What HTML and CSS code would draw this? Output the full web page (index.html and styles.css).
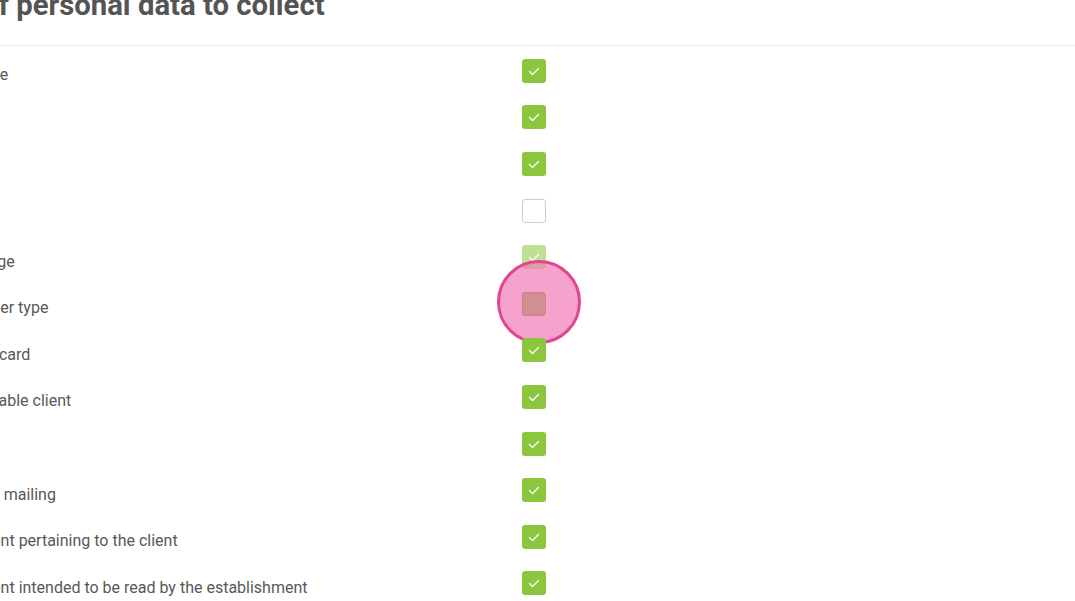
FILE: index.html
```html
<!DOCTYPE html>
<html>
<head>
<meta charset="utf-8">
<link rel="stylesheet" href="styles.css">
</head>
<body>
<div class="page">
  <h1 class="title">List of personal data to collect</h1>
  <div class="divider"></div>
  <div class="table">
    <div class="row"><span class="label">Surname</span><span class="box on"><svg viewBox="0 0 24 24"><polyline points="7.5,12.5 10.5,15.5 16.5,9.5"/></svg></span></div>
    <div class="row"><span class="label">Email</span><span class="box on"><svg viewBox="0 0 24 24"><polyline points="7.5,12.5 10.5,15.5 16.5,9.5"/></svg></span></div>
    <div class="row"><span class="label">Phone</span><span class="box on"><svg viewBox="0 0 24 24"><polyline points="7.5,12.5 10.5,15.5 16.5,9.5"/></svg></span></div>
    <div class="row"><span class="label">Title</span><span class="box off"></span></div>
    <div class="row"><span class="label">Language</span><span class="box on faded"><svg viewBox="0 0 24 24"><polyline points="7.5,12.5 10.5,15.5 16.5,9.5"/></svg></span></div>
    <div class="row"><span class="label">Customer type</span><span class="box pressed"></span><span class="tap"></span></div>
    <div class="row"><span class="label">Loyalty card</span><span class="box on"><svg viewBox="0 0 24 24"><polyline points="7.5,12.5 10.5,15.5 16.5,9.5"/></svg></span></div>
    <div class="row"><span class="label">Undesirable client</span><span class="box on"><svg viewBox="0 0 24 24"><polyline points="7.5,12.5 10.5,15.5 16.5,9.5"/></svg></span></div>
    <div class="row"><span class="label">Gender</span><span class="box on"><svg viewBox="0 0 24 24"><polyline points="7.5,12.5 10.5,15.5 16.5,9.5"/></svg></span></div>
    <div class="row"><span class="label">Receive mailing</span><span class="box on"><svg viewBox="0 0 24 24"><polyline points="7.5,12.5 10.5,15.5 16.5,9.5"/></svg></span></div>
    <div class="row"><span class="label">Comment pertaining to the client</span><span class="box on"><svg viewBox="0 0 24 24"><polyline points="7.5,12.5 10.5,15.5 16.5,9.5"/></svg></span></div>
    <div class="row"><span class="label">Comment intended to be read by the establishment</span><span class="box on"><svg viewBox="0 0 24 24"><polyline points="7.5,12.5 10.5,15.5 16.5,9.5"/></svg></span></div>
  </div>
</div>
</body>
</html>
```
FILE: styles.css
```css
html, body {
  margin: 0;
  padding: 0;
  background: #fff;
  overflow: hidden;
  width: 1075px;
  height: 601px;
}
body {
  font-family: Roboto, "Liberation Sans", sans-serif;
  color: #585858;
}
.page {
  margin-left: -55.5px;
  width: 1200px;
}
.title {
  margin: -13px 0 0 -18.5px;
  font-size: 29.3px;
  font-weight: 700;
  line-height: 36px;
  color: #545454;
  height: 36px;
  white-space: nowrap;
}
.divider {
  margin-top: 22px;
  height: 1px;
  background: #ececec;
}
.table {
  display: flex;
  flex-direction: column;
  padding-top: 1.5px;
}
.row {
  position: relative;
  display: grid;
  grid-template-columns: 577.5px 24px;
  align-items: center;
  height: 46.6px;
}
.label {
  font-size: 16px;
  line-height: 20px;
  padding-top: 9px;
  white-space: nowrap;
}
.box {
  width: 24px;
  height: 24px;
  box-sizing: border-box;
  border-radius: 3px;
  display: flex;
  align-items: center;
  justify-content: center;
}
.box svg {
  width: 24px;
  height: 24px;
}
.box polyline {
  fill: none;
  stroke: #fff;
  stroke-width: 1.3;
  stroke-linecap: round;
  stroke-linejoin: round;
}
.on {
  background: #8cc63f;
}
.faded {
  opacity: 0.55;
}
.off {
  background: #fff;
  border: 1.5px solid #cbccce;
}
.pressed {
  background: #86bd3a;
  border: 1.5px solid #6e9e30;
}
.tap {
  position: absolute;
  left: 552.5px;
  top: -20.5px;
  width: 84px;
  height: 84px;
  box-sizing: border-box;
  border-radius: 50%;
  background: rgba(241, 124, 182, 0.7);
  border: 3px solid #e2468e;
}
```
